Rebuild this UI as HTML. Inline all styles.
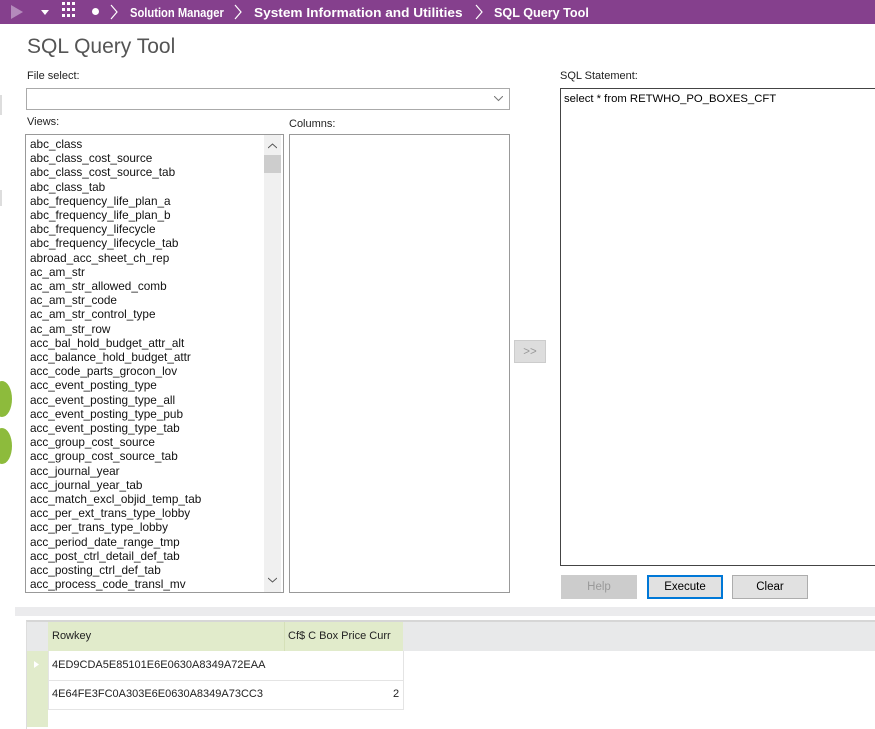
<!DOCTYPE html><html><head><style>
body{margin:0;width:875px;height:727px;overflow:hidden;background:#fff;font-family:"Liberation Sans",sans-serif;position:relative}
.a{position:absolute}
.top{left:0;top:0;width:875px;height:24px;background:#85408d;color:#fff;font-weight:bold;font-size:13px}
.top span.t{transform-origin:0 0;white-space:nowrap}
.lbl{font-size:11px;color:#222}
.list{font-size:12px;color:#111;line-height:14.2px;transform:scaleX(0.98);transform-origin:0 0}
.btn{border:1px solid #adadad;background:#e1e1e1;font-size:11.5px;text-align:center;line-height:22px;box-sizing:border-box}
</style></head><body>
<div class="a top">
<svg class="a" style="left:10px;top:5px" width="14" height="14"><path d="M1 0L13 7L1 14Z" fill="#b48abc"/></svg>
<svg class="a" style="left:41px;top:10px" width="8" height="6"><path d="M0 0L8 0L4 5Z" fill="#fff"/></svg>
<svg class="a" style="left:62px;top:2px" width="14" height="18"><g fill="#fff"><rect x="0" y="0" width="3" height="3"/><rect x="5" y="0" width="3" height="3"/><rect x="10" y="0" width="3" height="3"/><rect x="0" y="6" width="3" height="3"/><rect x="5" y="6" width="3" height="3"/><rect x="10" y="6" width="3" height="3"/><rect x="0" y="12" width="3" height="3"/><rect x="5" y="12" width="3" height="3"/><rect x="10" y="12" width="3" height="3"/></g></svg>
<div class="a" style="left:92px;top:8px;width:7px;height:7px;border-radius:50%;background:#fff"></div>
<svg class="a" style="left:110px;top:4px" width="8" height="16"><path d="M1 1L7 8L1 15" fill="none" stroke="#fff" stroke-width="1.2"/></svg>
<span class="a t" style="left:130px;top:5px;transform:scaleX(0.86)">Solution Manager</span>
<svg class="a" style="left:234px;top:4px" width="8" height="16"><path d="M1 1L7 8L1 15" fill="none" stroke="#fff" stroke-width="1.2"/></svg>
<span class="a t" style="left:254px;top:5px;transform:scaleX(1.05)">System Information and Utilities</span>
<svg class="a" style="left:475px;top:4px" width="8" height="16"><path d="M1 1L7 8L1 15" fill="none" stroke="#fff" stroke-width="1.2"/></svg>
<span class="a t" style="left:494px;top:5px;transform:scaleX(0.97)">SQL Query Tool</span>
</div>
<div class="a" style="left:27px;top:35px;font-size:21px;color:#555">SQL Query Tool</div>
<div class="a lbl" style="left:27px;top:70px">File select:</div>
<div class="a" style="left:26px;top:88px;width:482px;height:20px;border:1px solid #aaa"><svg class="a" style="right:6px;top:7px" width="9" height="6"><path d="M0 0L4.5 4.5L9 0" fill="none" stroke="#777"/></svg></div>
<div class="a lbl" style="left:27px;top:116px">Views:</div>
<div class="a lbl" style="left:289px;top:118px">Columns:</div>
<div class="a" style="left:25px;top:134px;width:257px;height:457px;border:1px solid #999;overflow:hidden">
<div class="a list" style="left:4px;top:2px">abc_class<br>abc_class_cost_source<br>abc_class_cost_source_tab<br>abc_class_tab<br>abc_frequency_life_plan_a<br>abc_frequency_life_plan_b<br>abc_frequency_lifecycle<br>abc_frequency_lifecycle_tab<br>abroad_acc_sheet_ch_rep<br>ac_am_str<br>ac_am_str_allowed_comb<br>ac_am_str_code<br>ac_am_str_control_type<br>ac_am_str_row<br>acc_bal_hold_budget_attr_alt<br>acc_balance_hold_budget_attr<br>acc_code_parts_grocon_lov<br>acc_event_posting_type<br>acc_event_posting_type_all<br>acc_event_posting_type_pub<br>acc_event_posting_type_tab<br>acc_group_cost_source<br>acc_group_cost_source_tab<br>acc_journal_year<br>acc_journal_year_tab<br>acc_match_excl_objid_temp_tab<br>acc_per_ext_trans_type_lobby<br>acc_per_trans_type_lobby<br>acc_period_date_range_tmp<br>acc_post_ctrl_detail_def_tab<br>acc_posting_ctrl_def_tab<br>acc_process_code_transl_mv</div>
<div class="a" style="left:238px;top:0;width:17px;height:457px;background:#f0f0f0"></div>
<div class="a" style="left:238px;top:20px;width:17px;height:18px;background:#cdcdcd"></div>
<svg class="a" style="left:242px;top:8px" width="9" height="6"><path d="M0 5L4.5 1L9 5" fill="none" stroke="#555"/></svg>
<svg class="a" style="left:242px;top:442px" width="9" height="6"><path d="M0 1L4.5 5L9 1" fill="none" stroke="#555"/></svg>
</div>
<div class="a" style="left:289px;top:134px;width:219px;height:457px;border:1px solid #999"></div>
<div class="a btn" style="left:514px;top:340px;width:32px;height:23px;color:#999;border-color:#ccc;background:#ddd">&gt;&gt;</div>
<div class="a lbl" style="left:560px;top:70px">SQL Statement:</div>
<div class="a" style="left:560px;top:88px;width:330px;height:478px;border:1px solid #444;box-sizing:border-box"><div class="a" style="left:3px;top:4px;font-size:11.3px">select * from RETWHO_PO_BOXES_CFT</div></div>
<div class="a btn" style="left:561px;top:575px;width:76px;height:24px;color:#999;background:#ccc;border-color:#ccc">Help</div>
<div class="a btn" style="left:647px;top:575px;width:76px;height:24px;border:2px solid #0078d7;line-height:20px">Execute</div>
<div class="a btn" style="left:732px;top:575px;width:76px;height:24px">Clear</div>
<div class="a" style="left:15px;top:607px;width:860px;height:9px;background:#ebebed"></div>
<div class="a" style="left:26px;top:620px;width:849px;height:107px;border-top:2px solid #d6d6d6;border-left:1px solid #ddd"></div>
<div class="a" style="left:27px;top:622px;width:848px;height:29px;background:#e8e9ea"></div>
<div class="a" style="left:27px;top:651px;width:21px;height:76px;background:#e1ebcb"></div>
<div class="a" style="left:48px;top:622px;width:355px;height:29px;background:#e1ebcb"></div>
<div class="a" style="left:284px;top:622px;width:1px;height:29px;background:#d5e0b8"></div>
<div class="a" style="left:52px;top:630px;font-size:11px;color:#222">Rowkey</div>
<div class="a" style="left:288px;top:630px;font-size:11px;color:#222">Cf$ C Box Price Curr</div>
<div class="a" style="left:48px;top:651px;width:354px;height:58px;border:1px solid #e4e4e4;border-top:none"></div>
<div class="a" style="left:48px;top:680px;width:355px;height:1px;background:#e4e4e4"></div>
<svg class="a" style="left:34px;top:661px" width="5" height="7"><path d="M0 0L5 3.5L0 7Z" fill="#fff"/></svg>
<div class="a" style="left:52px;top:659px;font-size:11px;color:#222">4ED9CDA5E85101E6E0630A8349A72EAA</div>
<div class="a" style="left:52px;top:688px;font-size:11px;color:#222">4E64FE3FC0A303E6E0630A8349A73CC3</div>
<div class="a" style="left:393px;top:688px;font-size:11px;color:#222">2</div>
<div class="a" style="left:-8px;top:381px;width:20px;height:36px;border-radius:50%;background:#8dbb3c"></div>
<div class="a" style="left:-8px;top:428px;width:20px;height:36px;border-radius:50%;background:#8dbb3c"></div>
<div class="a" style="left:0;top:95px;width:2px;height:20px;background:#ddd"></div>
<div class="a" style="left:0;top:190px;width:2px;height:16px;background:#ddd"></div>
</body></html>
